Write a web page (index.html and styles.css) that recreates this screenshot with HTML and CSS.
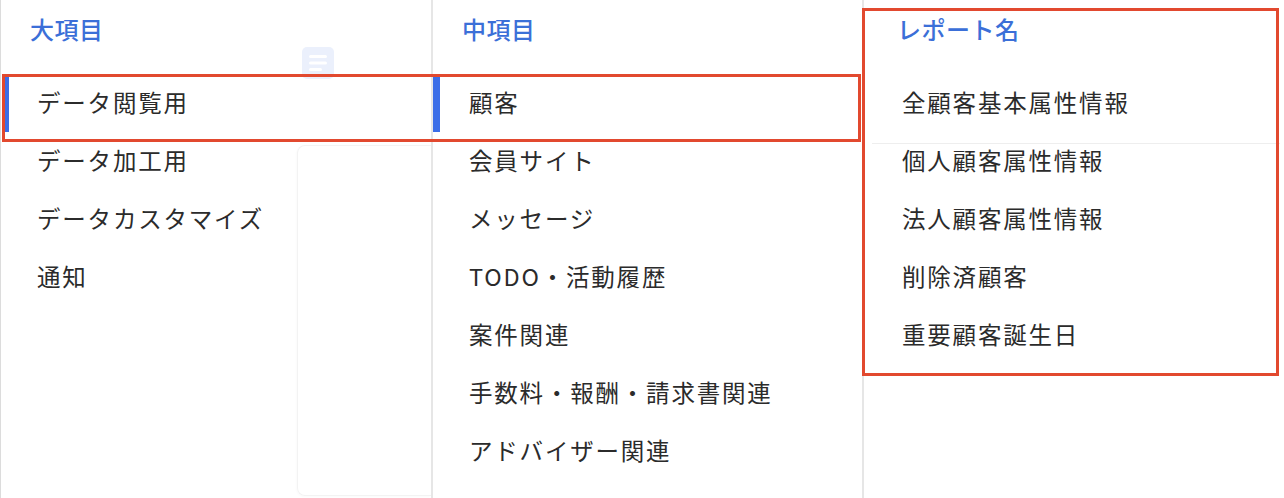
FILE: index.html
```html
<!DOCTYPE html>
<html lang="ja">
<head>
<meta charset="utf-8">
<title>レポート選択</title>
<link rel="stylesheet" href="styles.css">
</head>
<body>
<div class="board">
  <section class="col col-1">
    <h2 class="col-head">大項目</h2>
    <ul class="list">
      <li class="item is-active">データ閲覧用</li>
      <li class="item">データ加工用</li>
      <li class="item">データカスタマイズ</li>
      <li class="item">通知</li>
    </ul>
  </section>
  <section class="col col-2">
    <h2 class="col-head">中項目</h2>
    <ul class="list">
      <li class="item is-active">顧客</li>
      <li class="item">会員サイト</li>
      <li class="item">メッセージ</li>
      <li class="item">TODO・活動履歴</li>
      <li class="item">案件関連</li>
      <li class="item">手数料・報酬・請求書関連</li>
      <li class="item">アドバイザー関連</li>
    </ul>
  </section>
  <section class="col col-3">
    <h2 class="col-head">レポート名</h2>
    <ul class="list">
      <li class="item">全顧客基本属性情報</li>
      <li class="item">個人顧客属性情報</li>
      <li class="item">法人顧客属性情報</li>
      <li class="item">削除済顧客</li>
      <li class="item">重要顧客誕生日</li>
    </ul>
  </section>

  <div class="ghost-icon">
    <svg width="32" height="32" viewBox="0 0 32 32">
      <rect x="0" y="0" width="32" height="32" rx="5" fill="#e9effc"/>
      <rect x="7" y="8" width="18" height="3" rx="1.5" fill="#ffffff"/>
      <rect x="7" y="14.5" width="18" height="3" rx="1.5" fill="#ffffff"/>
      <rect x="7" y="21" width="13" height="3" rx="1.5" fill="#ffffff"/>
    </svg>
  </div>
  <div class="ghost-card"></div>
  <div class="ghost-line"></div>

  <div class="mark mark-row"></div>
  <div class="mark mark-col"></div>
</div>
</body>
</html>
```

FILE: styles.css
```css
* { box-sizing: border-box; }

html, body {
  margin: 0;
  padding: 0;
  background: #ffffff;
}

body {
  font-family: "Noto Sans CJK JP", "Noto Sans", sans-serif;
  color: #2b2b2b;
  width: 1284px;
  height: 498px;
  overflow: hidden;
}

.board {
  position: relative;
  display: grid;
  grid-template-columns: 433px 431px 1fr;
  height: 498px;
}

.col {
  border-right: 2px solid #e6e6e6;
  min-height: 498px;
}

.col-1 { border-left: 1px solid #dcdcdc; }
.col-3 { border-right: none; }

.col-head {
  margin: 0;
  height: 74px;
  padding-left: 29px;
  padding-top: 12px;
  font-size: 24px;
  line-height: 34px;
  font-weight: 500;
  color: #3b6fd8;
  letter-spacing: 0.5px;
}

.col-3 .col-head { padding-left: 33px; }

.list {
  list-style: none;
  margin: 0;
  padding: 0;
}

.item {
  position: relative;
  height: 58px;
  padding-left: 36px;
  font-size: 23.5px;
  line-height: 56px;
  letter-spacing: 1.8px;
  white-space: nowrap;
}

.col-3 .item { padding-left: 38px; }

.item.is-active::before {
  content: "";
  position: absolute;
  left: 0;
  top: 2px;
  bottom: 0;
  width: 7px;
  background: #3b6ee8;
}

.col-1 .item.is-active::before { left: 1px; }

.ghost-icon {
  position: absolute;
  left: 302px;
  top: 47px;
  width: 32px;
  height: 32px;
  opacity: 0.9;
}

.ghost-icon svg { display: block; }

.ghost-card {
  position: absolute;
  left: 297px;
  top: 145px;
  width: 134px;
  height: 351px;
  border: 1px solid #f3f3f3;
  border-right: none;
  border-radius: 8px 0 0 8px;
  box-shadow: -1px 1px 2px rgba(0, 0, 0, 0.02);
}

.ghost-line {
  position: absolute;
  left: 872px;
  top: 143px;
  width: 408px;
  height: 1px;
  background: #eeeeee;
}

.mark {
  position: absolute;
  border: 3px solid #e2492f;
  pointer-events: none;
}

.mark-row {
  left: 2px;
  top: 74px;
  width: 859px;
  height: 68px;
}

.mark-col {
  left: 862px;
  top: 8px;
  width: 417px;
  height: 368px;
}
```
